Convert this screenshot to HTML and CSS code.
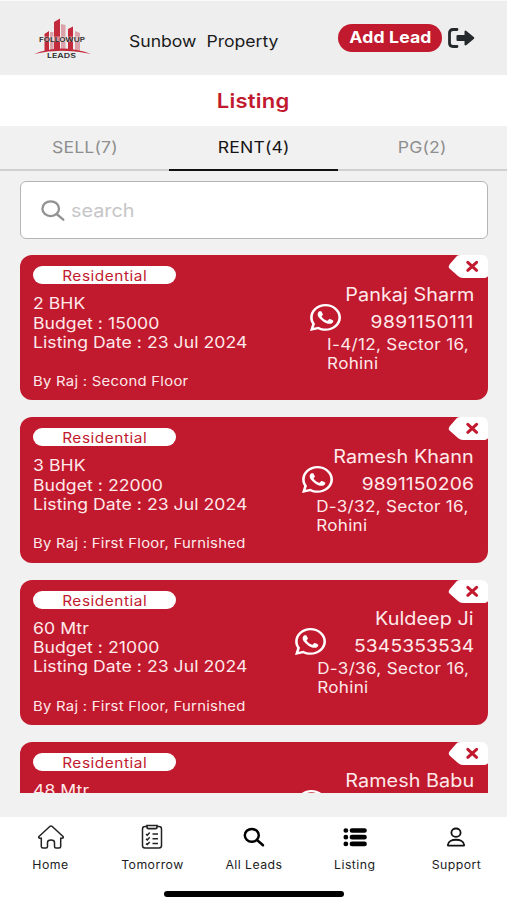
FILE: index.html
```html
<!DOCTYPE html>
<html lang="en">
<head>
<meta charset="utf-8">
<title>Listing</title>
<link rel="stylesheet" href="styles.css">
</head>
<body>
<svg class="defs" aria-hidden="true">
  <symbol id="whatsapp" viewBox="0 32 448 448" preserveAspectRatio="none"><path d="M380.900 97.100C339 55.100 283.200 32 223.900 32c-122.400 0-222 99.600-222 222 0 39.100 10.200 77.300 29.600 111L0 480l117.700-30.900c32.400 17.700 68.900 27 106.100 27h.1c122.300 0 224.100-99.600 224.100-222 0-59.300-25.200-115-67.100-157zm-157 341.600c-33.200 0-65.700-8.900-94-25.700l-6.700-4-69.800 18.300L72 359.200l-4.400-7c-18.500-29.400-28.200-63.300-28.200-98.200 0-101.700 82.800-184.500 184.600-184.500 49.300 0 95.600 19.200 130.400 54.100 34.800 34.900 56.200 81.200 56.100 130.500 0 101.800-84.900 184.600-186.600 184.600zm101.200-138.200c-5.500-2.800-32.800-16.200-37.900-18-5.100-1.900-8.800-2.800-12.500 2.800-3.700 5.600-14.300 18-17.600 21.800-3.200 3.700-6.500 4.200-12 1.400-32.600-16.300-54-29.100-75.500-66-5.700-9.800 5.700-9.100 16.300-30.300 1.800-3.700.9-6.900-.5-9.700-1.400-2.800-12.500-30.100-17.100-41.200-4.500-10.800-9.100-9.300-12.500-9.500-3.200-.2-6.900-.2-10.600-.2-3.700 0-9.700 1.400-14.800 6.900-5.100 5.600-19.400 19-19.400 46.300 0 27.300 19.900 53.700 22.600 57.400 2.800 3.700 39.100 59.700 94.800 83.800 35.200 15.200 49 16.500 66.600 13.900 10.700-1.600 32.800-13.400 37.400-26.400 4.600-13 4.600-24.100 3.200-26.400-1.300-2.500-5-3.900-10.500-6.600z"/></symbol>
  <symbol id="tag" viewBox="0 0 40 24"><path fill="#fff" d="M12 0H34Q40 1 40 7V21Q39 23 35 23H15Q12 23 10 21L1.500 13.500Q0 11.500 1.500 9.500L8 2Q9 0 12 0Z"/><path d="M19.800 7.300 28.600 15.300M28.600 7.300 19.800 15.300" fill="none" stroke="#c1192e" stroke-width="3" stroke-linecap="round"/></symbol>
</svg>
<div class="app">
  <header class="topbar">
    <svg class="logo" viewBox="0 0 60 44">
      <g fill="#dba3a9"><path d="M27 8l4.500 1v26H27zM41 15l5 2v19h-5zM16 16h3.500v19H16z"/></g>
      <g fill="#c32a3b"><path d="M20 6l6-3.500V34h-6zM34 13l5-2.500V34h-5zM10.500 18l4.500-3v20h-4.500z"/></g>
      <path fill="#c32a3b" d="M0 38Q28 27 57 38Q28 31.500 0 38Z"/>
      <rect x="4" y="20.500" width="48" height="5.500" fill="#eee" opacity=".5"/>
      <text x="5" y="25.800" font-size="6.800" textLength="46" lengthAdjust="spacingAndGlyphs">FOLLOWUP</text>
      <text x="13" y="42" font-size="6" textLength="29" lengthAdjust="spacingAndGlyphs">LEADS</text>
    </svg>
    <div class="company"><span class="wide left">Sunbow&nbsp; Property</span></div>
    <button class="add"><span class="wide">Add Lead</span></button>
    <svg class="exit" viewBox="0 0 27 20"><path d="M9 1.500H5Q1.500 1.500 1.500 5V15Q1.500 18.500 5 18.500H9" fill="none" stroke="#24292c" stroke-width="2.800" stroke-linecap="round"/><path d="M9.500 7H16.500V3.500Q17 2 18.500 3L26 9.200Q26.600 10 26 10.800L18.500 17Q17 18 16.500 16.500V13H9.500Q8.500 13 8.500 12V8Q8.500 7 9.500 7Z" fill="#24292c"/></svg>
  </header>
  <h1 class="title"><span class="wide">Listing</span></h1>
  <nav class="tabs">
    <div class="tab"><span class="wide">SELL(7)</span></div>
    <div class="tab active"><span class="wide">RENT(4)</span></div>
    <div class="tab"><span class="wide">PG(2)</span></div>
  </nav>
  <div class="search">
    <svg viewBox="0 0 24 21"><ellipse cx="9.700" cy="8.700" rx="8.300" ry="7.400"/><path d="M15.600 14 22.300 19.700"/></svg>
    <span class="wide left">search</span>
  </div>
  <main class="list">
    <article class="card first">
      <svg class="close"><use href="#tag"/></svg>
      <div class="info"><div class="badge"><span class="wide">Residential</span></div>
        <p class="wide left">2 BHK</p><p class="wide left">Budget : 15000</p><p class="wide left">Listing Date : 23 Jul 2024</p><p class="wide left by">By Raj : Second Floor</p></div>
      <div class="contact"><div class="name wide right">Pankaj Sharm</div>
        <div class="phone"><svg><use href="#whatsapp"/></svg><span class="wide right">9891150111</span></div>
        <div class="addr wide right">I-4/12, Sector 16,<br>Rohini</div></div>
    </article>
    <article class="card">
      <svg class="close"><use href="#tag"/></svg>
      <div class="info"><div class="badge"><span class="wide">Residential</span></div>
        <p class="wide left">3 BHK</p><p class="wide left">Budget : 22000</p><p class="wide left">Listing Date : 23 Jul 2024</p><p class="wide left by">By Raj : First Floor, Furnished</p></div>
      <div class="contact"><div class="name wide right">Ramesh Khann</div>
        <div class="phone"><svg><use href="#whatsapp"/></svg><span class="wide right">9891150206</span></div>
        <div class="addr wide right">D-3/32, Sector 16,<br>Rohini</div></div>
    </article>
    <article class="card">
      <svg class="close"><use href="#tag"/></svg>
      <div class="info"><div class="badge"><span class="wide">Residential</span></div>
        <p class="wide left">60 Mtr</p><p class="wide left">Budget : 21000</p><p class="wide left">Listing Date : 23 Jul 2024</p><p class="wide left by">By Raj : First Floor, Furnished</p></div>
      <div class="contact"><div class="name wide right">Kuldeep Ji</div>
        <div class="phone"><svg><use href="#whatsapp"/></svg><span class="wide right">5345353534</span></div>
        <div class="addr wide right">D-3/36, Sector 16,<br>Rohini</div></div>
    </article>
    <article class="card last">
      <svg class="close"><use href="#tag"/></svg>
      <div class="info"><div class="badge"><span class="wide">Residential</span></div>
        <p class="wide left">48 Mtr</p></div>
      <div class="contact"><div class="name wide right">Ramesh Babu</div>
        <div class="phone"><svg><use href="#whatsapp"/></svg></div></div>
    </article>
  </main>
  <footer class="bottom">
    <div class="items">
      <a class="item"><svg viewBox="0 0 28 26"><path d="M2 12.500 13 2.300Q14 1.500 15 2.300L26 12.500Q27 14 25 14.300H23.700V22.500Q23.700 24 22 24H19Q17.500 24 17.500 22.500V18.500Q17.500 16 14 16T10.500 18.500V22.500Q10.500 24 9 24H6Q4.300 24 4.300 22.500V14.300H3Q1 14 2 12.500Z" fill="none" stroke="#222" stroke-width="1.500"/></svg><span class="wide">Home</span></a>
      <a class="item"><svg viewBox="0 0 28 26"><g fill="none" stroke="#222" stroke-width="1.500"><path d="M9 2.500H7Q4.500 2.500 4.500 5V21.500Q4.500 24 7 24H21Q23.500 24 23.500 21.500V5Q23.500 2.500 21 2.500H19"/><path d="M9 1.500H19V3Q19 4.700 17.500 4.700H10.500Q9 4.700 9 3Z" stroke-width="1.700"/><path d="M8 10.200l1.300 1 2.400-2.600M8 14.900l1.300 1 2.400-2.600M8 19.600l1.300 1 2.400-2.600M14.500 10H20M14.500 14.700H20M14.500 19.400H20"/></g></svg><span class="wide">Tomorrow</span></a>
      <a class="item"><svg viewBox="0 0 28 26"><g fill="none" stroke="#000" stroke-width="2.500" stroke-linecap="round"><ellipse cx="12.800" cy="11.300" rx="7" ry="6.400"/><path d="M18 16 24 21.300"/></g></svg><span class="wide">All Leads</span></a>
      <a class="item"><svg viewBox="0 0 28 26"><g stroke="#000" stroke-width="4.700" stroke-linecap="round"><path d="M4.800 6.500H4.900M11 6.500H23.500M4.800 13.200H4.900M11 13.200H23.500M4.800 19.900H4.900M11 19.900H23.500"/></g></svg><span class="wide">Listing</span></a>
      <a class="item"><svg viewBox="0 0 28 26"><g fill="none" stroke="#111" stroke-width="1.800"><ellipse cx="14" cy="8.700" rx="4.600" ry="4.200"/><path d="M5.800 21C6.300 14 21.700 14 22.200 21Q22.200 21.700 21.500 21.700H6.500Q5.800 21.700 5.800 21Z"/></g></svg><span class="wide">Support</span></a>
    </div>
    <div class="homebar"></div>
  </footer>
</div>
</body>
</html>
```
FILE: styles.css
```css
* { box-sizing: border-box; }
body { margin: 0; font-family: Inter, "Liberation Sans", sans-serif; background: #f1f1f1; color: #1b1b1d; }
.defs { position: absolute; width: 0; height: 0; }
.app { display: flex; flex-direction: column; width: 507px; height: 900px; overflow: hidden; }
/* Extended letterforms: text is widened by a tenth from its anchor side */
.wide { display: inline-block; transform: scaleX(1.1); }
.left { transform-origin: left; }
.right { transform-origin: right; }
.topbar { display: flex; align-items: center; height: 75px; flex: none; background: #eee; border-top: 1px solid #fafafa; padding-left: 34px; }
.logo { width: 60px; height: 44px; fill: #2b2b2b; font-weight: 600; flex: none; }
.company { width: 209px; padding: 5px 0 0 35px; font-size: 16px; line-height: 20px; white-space: nowrap; flex: none; }
.add { width: 104px; height: 28px; margin-left: 35px; border: 0; border-radius: 14px; background: #c1192e; color: #fff; font: 700 16px/26px Inter, sans-serif; letter-spacing: 0.15px; padding: 0 0 2px; flex: none; }
.exit { width: 27px; height: 20px; margin-left: 6px; flex: none; }
.title { margin: 0; height: 51px; flex: none; display: flex; align-items: center; justify-content: center; background: #fff; color: #c1192e; font-size: 20px; font-weight: 600; letter-spacing: 0.25px; }
.tabs { display: grid; grid-template-columns: repeat(3, 1fr); height: 45px; flex: none; }
.tab { border-bottom: 2px solid #d0d0d0; text-align: center; color: #8e8e8e; font-size: 16px; line-height: 43px; letter-spacing: 0.15px; }
.tab.active { color: #151515; border-bottom-color: #111; }
.search { flex: none; display: flex; align-items: center; gap: 6px; height: 58px; margin: 10px 19px 0 20px; padding-left: 20px; border: 1.500px solid #b5b5b5; border-radius: 6px; background: #fff; color: #c6c6c8; font-size: 18px; }
.search svg { width: 24px; height: 21px; fill: none; stroke: #929292; stroke-width: 2.300; stroke-linecap: round; }
.list { display: flex; flex-direction: column; gap: 17px; height: 538px; flex: none; margin: 16.300px 19px 0 20px; overflow: hidden; }
.card { position: relative; display: flex; justify-content: space-between; height: 145.200px; flex: none; padding: 11px 14px 0 13px; border-radius: 12px; background: #c1192e; color: #ffe9ea; }
.close { position: absolute; top: 0; right: 0; width: 40px; height: 24px; }
.info { display: flex; flex-direction: column; align-items: flex-start; }
.info p { margin: 0; font-size: 16px; line-height: 19.300px; letter-spacing: 0.05px; white-space: nowrap; }
.badge { width: 143px; height: 18px; margin-bottom: 10px; border-radius: 9px; background: #fff; color: #c1192e; text-align: center; font-size: 14px; line-height: 19px; letter-spacing: 0.5px; }
.info .by { margin-top: 20px; font-size: 13.500px; letter-spacing: 0.25px; }
.contact { display: flex; flex-direction: column; align-items: flex-end; padding-top: 17.500px; white-space: nowrap; }
.name { font-size: 18px; line-height: 22px; letter-spacing: 0.05px; }
.phone { display: flex; align-items: flex-start; height: 29px; font-size: 17.500px; line-height: 31px; letter-spacing: 0.1px; }
.first .phone { letter-spacing: 0.4px; }
.phone svg { width: 31px; height: 27px; margin: -2px 39px 0 0; fill: #fff; }
.last .phone svg { margin-right: 147px; }
.addr { margin-right: 5px; font-size: 15.500px; line-height: 19.300px; letter-spacing: 0.3px; }
.bottom { margin-top: auto; height: 83px; flex: none; background: #fff; }
.items { display: grid; grid-template-columns: repeat(5, 1fr); padding-top: 7px; }
.item { display: flex; flex-direction: column; align-items: center; font-size: 11.200px; line-height: 14px; letter-spacing: 0.4px; gap: 8px; }
.item svg { width: 28px; height: 26px; }
.homebar { width: 180px; height: 6px; margin: 19px auto 0; border-radius: 3px; background: #000; }
```
